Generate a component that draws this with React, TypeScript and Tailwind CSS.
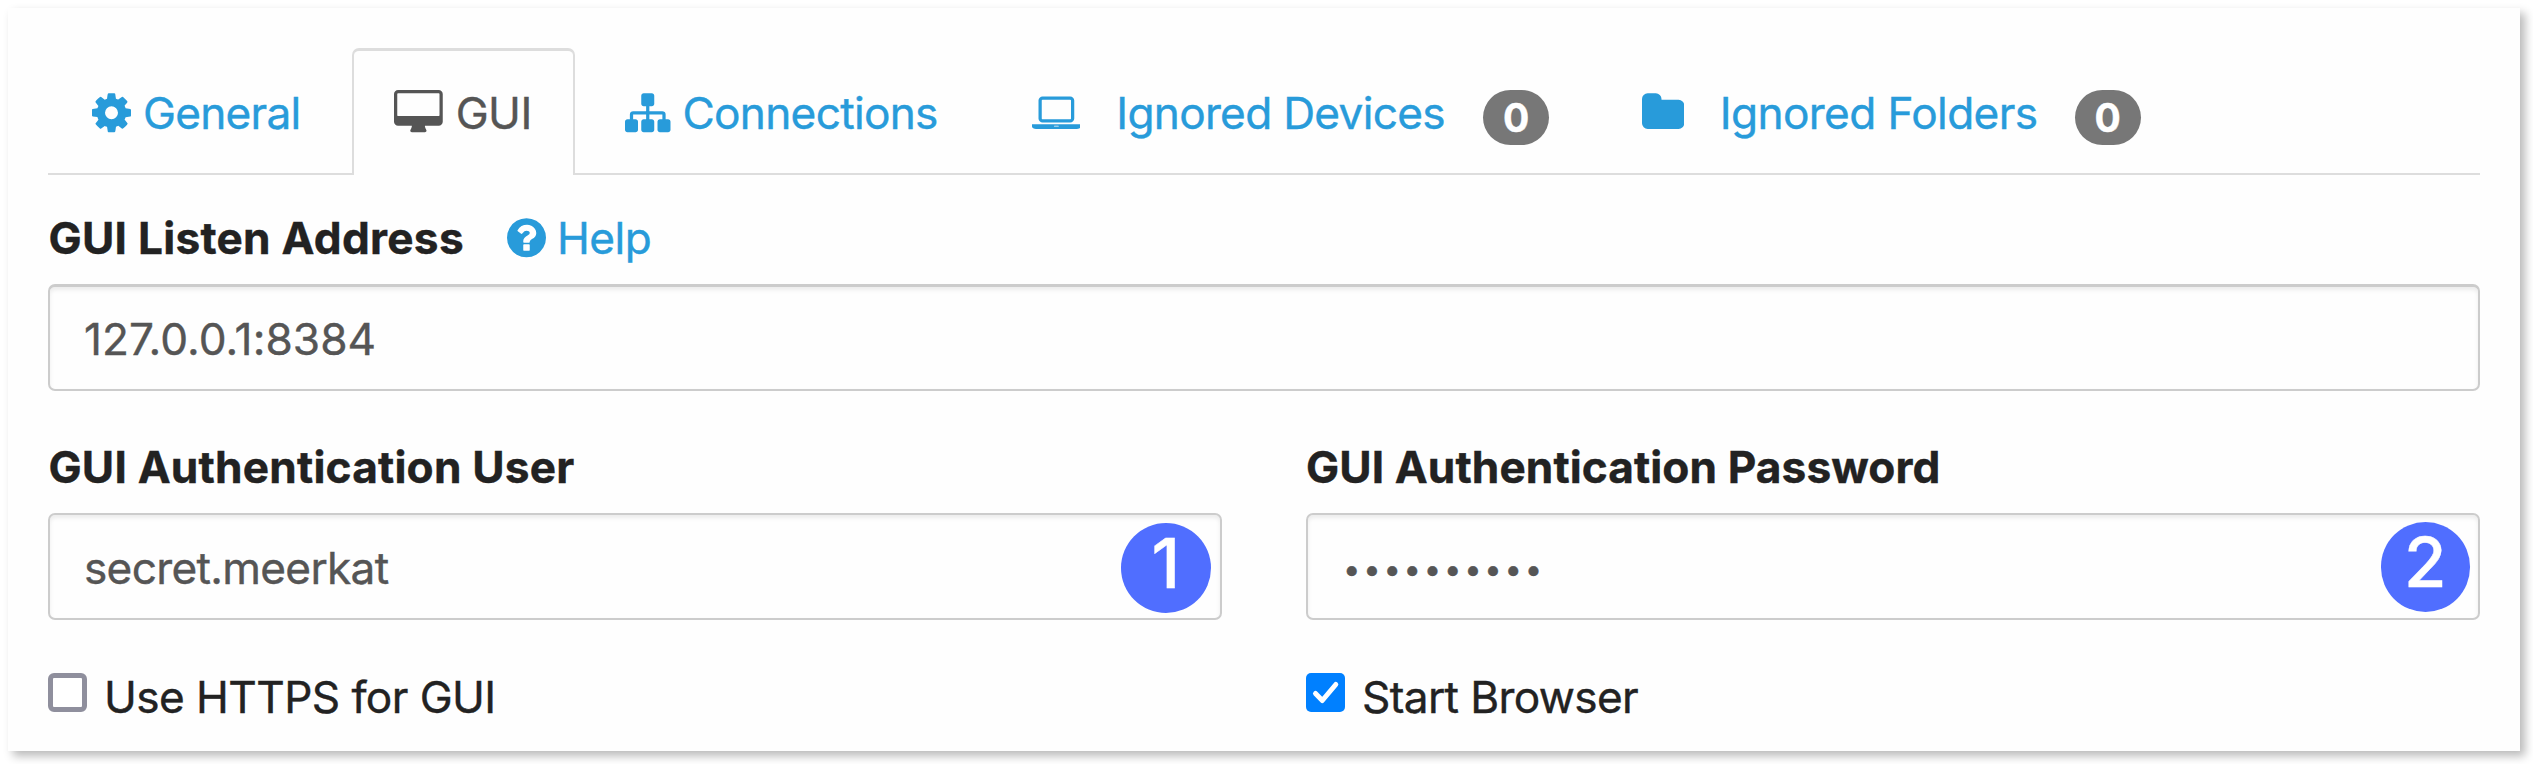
import type { ReactNode } from "react";

type IconProps = { className: string; viewBox: string; d: string };

function Icon({ className, viewBox, d }: IconProps) {
  return (
    <svg className={className} viewBox={viewBox} fill="currentColor" aria-hidden="true">
      <path d={d} />
    </svg>
  );
}

const COG =
  "M1152 896q0-106-75-181t-181-75-181 75-75 181 75 181 181 75 181-75 75-181zm512-109v222q0 12-8 23t-20 13l-185 28q-19 54-39 91 35 50 107 138 10 12 10 25t-9 23q-27 37-99 108t-94 71q-12 0-26-9l-138-108q-44 23-91 38-16 136-29 186-7 28-36 28h-222q-14 0-24.5-8.5t-11.5-21.5l-28-184q-49-16-90-37l-141 107q-10 9-25 9-14 0-25-11-126-114-165-168-7-10-7-23 0-12 8-23 15-21 51-66.5t54-70.5q-27-50-41-99l-183-27q-13-2-21-12.5t-8-23.5v-222q0-12 8-23t19-13l186-28q14-46 39-92-40-57-107-138-10-12-10-24 0-10 9-23 26-36 98.5-107.5t94.5-71.5q13 0 26 10l138 107q44-23 91-38 16-136 29-186 7-28 36-28h222q14 0 24.5 8.5t11.5 21.5l28 184q49 16 90 37l142-107q9-9 24-9 13 0 25 10 129 119 165 170 7 8 7 22 0 12-8 23-15 21-51 66.5t-54 70.5q26 50 41 98l183 28q13 2 21 12.5t8 23.5z";
const DESKTOP =
  "M1728 992v-832q0-13-9.5-22.5t-22.5-9.5h-1600q-13 0-22.5 9.5t-9.5 22.5v832q0 13 9.5 22.5t22.5 9.5h1600q13 0 22.5-9.5t9.5-22.5zm128-832v1088q0 66-47 113t-113 47h-544q0 37 16 77.5t32 71 16 43.5q0 26-19 45t-45 19h-512q-26 0-45-19t-19-45q0-14 16-44t32-70 16-78h-544q-66 0-113-47t-47-113v-1088q0-66 47-113t113-47h1600q66 0 113 47t47 113z";
const SITEMAP =
  "M1792 1248v320q0 40-28 68t-68 28h-320q-40 0-68-28t-28-68v-320q0-40 28-68t68-28h96v-192h-512v192h96q40 0 68 28t28 68v320q0 40-28 68t-68 28h-320q-40 0-68-28t-28-68v-320q0-40 28-68t68-28h96v-192h-512v192h96q40 0 68 28t28 68v320q0 40-28 68t-68 28h-320q-40 0-68-28t-28-68v-320q0-40 28-68t68-28h96v-192q0-52 38-90t90-38h512v-192h-96q-40 0-68-28t-28-68v-320q0-40 28-68t68-28h320q40 0 68 28t28 68v320q0 40-28 68t-68 28h-96v192h512q52 0 90 38t38 90v192h96q40 0 68 28t28 68z";
const LAPTOP =
  "M416 1280q-66 0-113-47t-47-113v-704q0-66 47-113t113-47h1088q66 0 113 47t47 113v704q0 66-47 113t-113 47h-1088zm-32-864v704q0 13 9.5 22.5t22.5 9.5h1088q13 0 22.5-9.5t9.5-22.5v-704q0-13-9.5-22.5t-22.5-9.5h-1088q-13 0-22.5 9.5t-9.5 22.5zm1376 928h160v96q0 40-47 68t-113 28h-1600q-66 0-113-28t-47-68v-96h1760zm-720 96q16 0 16-16t-16-16h-160q-16 0-16 16t16 16h160z";
const FOLDER =
  "M1728 608v704q0 92-66 158t-158 66h-1216q-92 0-158-66t-66-158v-960q0-92 66-158t158-66h320q92 0 158 66t66 158v32h672q92 0 158 66t66 158z";
const HELP =
  "M1024 1376v-192q0-14-9-23t-23-9h-192q-14 0-23 9t-9 23v192q0 14 9 23t23 9h192q14 0 23-9t9-23zm256-672q0-88-55.5-163t-138.5-116-170-41q-243 0-371 213-15 24 8 42l132 100q7 6 19 6 16 0 25-12 53-68 86-92 34-24 86-24 48 0 85.5 26t37.5 59q0 38-20 61t-68 45q-63 28-115.5 86.5t-52.5 125.5v36q0 14 9 23t23 9h192q14 0 23-9t9-23q0-19 21.5-49.5t54.5-49.5q32-18 49-28.5t46-35 44.5-48 28-60.5 12.5-81zm384 192q0 209-103 385.5t-279.5 279.5-385.5 103-385.5-103-279.5-279.5-103-385.5 103-385.5 279.5-279.5 385.5-103 385.5 103 279.5 279.5 103 385.5z";

function Tab({ className, children }: { className: string; children: ReactNode }) {
  return (
    <li className={`flex h-[127px] items-center border-b-2 border-[#ddd] pt-[5px] whitespace-nowrap text-[#289bda] ${className}`}>
      {children}
    </li>
  );
}

function Badge({ children }: { children: ReactNode }) {
  return (
    <span className="mt-[9px] h-[55px] w-[66px] rounded-full bg-[#777] text-center text-[39px] leading-[56px] font-bold text-white">
      {children}
    </span>
  );
}

function Field({ className, children }: { className: string; children: ReactNode }) {
  return (
    <div
      className={`relative flex h-[107px] items-center rounded-[7px] border-2 border-[#ccc] pt-[3px] pl-[34px] whitespace-nowrap text-[#555] shadow-[inset_0_3px_4px_rgba(0,0,0,0.075)] ${className}`}
    >
      {children}
    </div>
  );
}

function Marker({ className, children }: { className: string; children: ReactNode }) {
  return (
    <span
      className={`absolute flex size-[89.5px] items-center justify-center rounded-full bg-[#506eff] pb-[9px] text-[69px] leading-none font-medium text-white ${className}`}
    >
      {children}
    </span>
  );
}

export default function App() {
  return (
    <div className="h-[764px] w-[2533px] overflow-hidden bg-white pt-2 pl-2 font-['Inter',sans-serif] text-[44.2px] leading-[56px] font-normal text-[#222] [-webkit-text-stroke:0.4px]">
      <main className="h-[743px] w-[2512px] bg-[#fefefe] px-10 pt-10 shadow-[5px_5px_9px_rgba(0,0,0,0.28)]">
        <ul className="flex">
          <Tab className="w-[304px] gap-3 pl-11">
            <Icon className="h-[45.5px] w-[39px]" viewBox="128 0 1536 1792" d={COG} />
            <span className="tracking-[-0.75px]">General</span>
          </Tab>
          <li className="flex h-[127px] w-[223px] items-center gap-[13px] rounded-t-[7px] border-x-2 border-t-3 border-[#ddd] pl-10 text-[#555]">
            <Icon className="h-[45.5px] w-[48.75px]" viewBox="-64 0 1920 1792" d={DESKTOP} />
            <span className="tracking-[-0.6px]">GUI</span>
          </li>
          <Tab className="w-[414px] gap-3 pl-[50px]">
            <Icon className="h-[45.5px] w-[45.5px]" viewBox="0 0 1792 1792" d={SITEMAP} />
            <span className="tracking-[-0.72px]">Connections</span>
          </Tab>
          <Tab className="w-[610px] pl-[42.5px]">
            <Icon className="h-[45.5px] w-[48.75px]" viewBox="0 0 1920 1792" d={LAPTOP} />
            <span className="ml-[36px] w-[367px] tracking-[-0.72px]">Ignored Devices</span>
            <Badge>0</Badge>
          </Tab>
          <Tab className="flex-1 pl-[42.5px]">
            <Icon className="h-[45.5px] w-[42.25px]" viewBox="64 0 1664 1792" d={FOLDER} />
            <span className="ml-[36px] w-[355px] tracking-[-0.62px]">Ignored Folders</span>
            <Badge>0</Badge>
          </Tab>
        </ul>

        <div className="flex h-[109px] items-center pt-[17px] whitespace-nowrap">
          <label className="w-[459px] pl-[0.5px] font-bold tracking-[0.27px]">GUI Listen Address</label>
          <a className="flex items-center gap-[11px] text-[#289bda]">
            <Icon className="h-[45.5px] w-[39px]" viewBox="128 0 1536 1792" d={HELP} />
            <span className="tracking-[-0.5px]">Help</span>
          </a>
        </div>
        <Field className="border-t-3">
          <span className="mb-0.5 tracking-[0.07px]">127.0.0.1:8384</span>
        </Field>

        <div className="flex justify-between">
          <section className="w-[1174px]">
            <div className="flex h-[122px] items-center pt-[30px] pl-[0.5px] font-bold tracking-[0.2px] whitespace-nowrap">
              GUI Authentication User
            </div>
            <Field className="">
              <span className="tracking-[-0.7px]">secret.meerkat</span>
              <Marker className="top-2 right-[9.5px]">1</Marker>
            </Field>
            <label className="flex h-[131px] items-center pt-[23px]">
              <span className="mb-[9px] size-[39px] rounded-[6px] border-[5.5px] border-[#8f8f9d] bg-white" />
              <span className="ml-[17px] tracking-[-0.59px]">Use HTTPS for GUI</span>
            </label>
          </section>
          <section className="w-[1174px]">
            <div className="flex h-[122px] items-center pt-[30px] font-bold tracking-[0.09px] whitespace-nowrap">
              GUI Authentication Password
            </div>
            <Field className="">
              <span className="mt-[2px] ml-[1px] text-[31px] tracking-[2.75px]">••••••••••</span>
              <Marker className="top-[7px] right-2">2</Marker>
            </Field>
            <label className="flex h-[131px] items-center pt-[23px]">
              <svg className="mb-[9px] size-[39px] rounded-[5px] bg-[#0080ff]" viewBox="0 0 39 39" fill="none">
                <path d="M9.5 20.5 16.3 27.5 29.8 11.5" stroke="#fff" strokeWidth="5" strokeLinecap="round" strokeLinejoin="round" />
              </svg>
              <span className="ml-[17px] tracking-[-0.64px]">Start Browser</span>
            </label>
          </section>
        </div>
      </main>
    </div>
  );
}
